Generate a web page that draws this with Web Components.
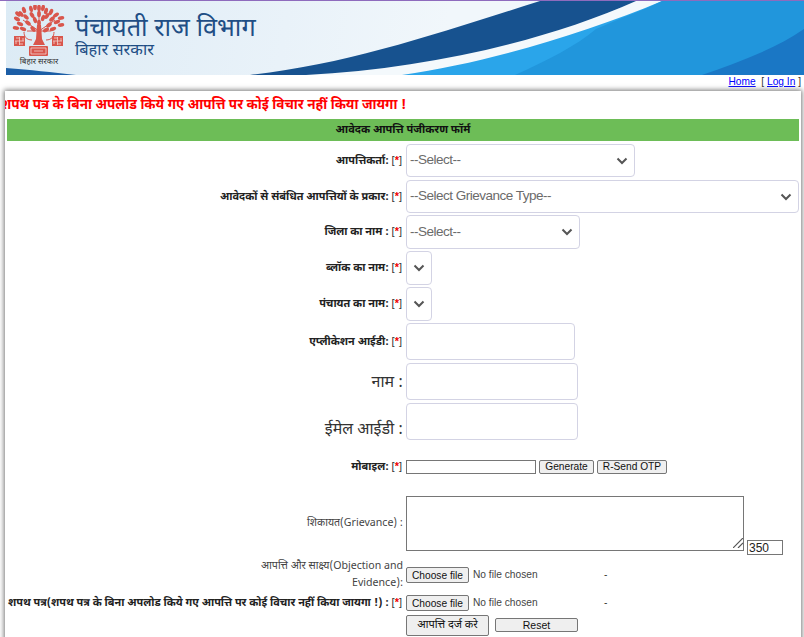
<!DOCTYPE html>
<html lang="hi">
<head>
<meta charset="utf-8">
<title>Panchayati Raj Vibhag</title>
<style>
html, body { margin: 0; padding: 0; height: 637px; overflow: hidden; background: #fff; }
body { font-family: "Liberation Sans", Arial, sans-serif; border-top: 1px solid #8e6bbd; box-sizing: border-box; }
</style>
</head>
<body>
<gov-banner></gov-banner>
<top-links></top-links>
<form-panel>
  <form-row label="आपत्तिकर्ता:" req h="33" gap="3"><drop-down w="229" h="33" text="--Select--"></drop-down></form-row>
  <form-row label="आवेदकों से संबंधित आपत्तियों के प्रकार:" req h="33" gap="2"><drop-down w="393" h="33" text="--Select Grievance Type--"></drop-down></form-row>
  <form-row label="जिला का नाम :" req h="34" gap="2"><drop-down w="174" h="34" text="--Select--"></drop-down></form-row>
  <form-row label="ब्लॉक का नाम:" req h="34" gap="2"><drop-down w="26" h="34"></drop-down></form-row>
  <form-row label="पंचायत का नाम:" req h="34" gap="2"><drop-down w="26" h="34"></drop-down></form-row>
  <form-row label="एप्लीकेशन आईडी:" req h="37" gap="3"><text-box w="169"></text-box></form-row>
  <form-row label="नाम :" big h="37" gap="3"><text-box w="172"></text-box></form-row>
  <form-row label="ईमेल आईडी :" big low h="37" gap="20"><text-box w="172"></text-box></form-row>
  <form-row label="मोबाइल:" req h="14" gap="22">
    <otp-field></otp-field>
  </form-row>
  <form-row label="शिकायत(Grievance) :" plain h="55" gap="7"><grievance-box></grievance-box></form-row>
  <form-row label="आपत्ति और साक्ष्य(Objection and Evidence):" plain h="34" gap="2"><file-pick></file-pick></form-row>
  <form-row label="शपथ पत्र(शपथ पत्र के बिना अपलोड किये गए आपत्ति पर कोई विचार नहीं किया जायगा !) :" req h="18" gap="2"><file-pick></file-pick></form-row>
  <form-row h="22" gap="0"><form-actions></form-actions></form-row>
</form-panel>

<script>
const hindi = '"Noto Sans Devanagari", "Lohit Devanagari", "Noto Sans", "Liberation Sans", sans-serif';

class GovBanner extends HTMLElement {
  constructor() {
    super();
    const leaves = [
      [22,13,-40],[18,18,-60],[25,9,-20],[27,16,-45],[21,23,-70],[17,27,-80],[29,22,-50],[24,28,-70],[19,13,-50],
      [32,8,-10],[33,14,-30],[36,6,0],[36,19,-20],[40,7,0],[40,13,0],[44,7,10],[44,17,20],[47,10,15],[48,15,35],
      [52,11,25],[53,18,50],[50,24,50],[57,14,55],[58,21,70],[54,28,70],[62,17,80],[62,24,80],[47,29,60],[34,28,-40],[40,22,0]
    ].map(([x, y, r]) => `<ellipse cx="${x}" cy="${y}" rx="1.900" ry="3.300" transform="rotate(${r} ${x} ${y})"/>`).join("");
    this.attachShadow({ mode: "open" }).innerHTML = `
<style>
:host { display: block; height: 74px; margin-left: 6px; position: relative; overflow: hidden;
  background: linear-gradient(100deg, #dcebf5 0%, #e9f2f9 35%, #f1f7fb 55%); font-family: ${hindi}; }
svg.bg { position: absolute; inset: 0; width: 100%; height: 100%; }
.row { position: relative; display: flex; height: 100%; }
.seal { width: 68px; margin-left: -1px; padding-top: 4px; flex: none; display: flex; flex-direction: column; }
.seal svg { flex: none; }
.seal span { font-size: 8px; line-height: 9px; text-align: center; color: #333; margin-top: -1px; white-space: nowrap; }
.titles { margin-left: 2px; color: #1f4e85; }
.t1 { font-size: 25.300px; line-height: 30px; margin-top: 14px; white-space: nowrap; }
.t2 { font-size: 16.400px; line-height: 18px; margin-top: -3px; white-space: nowrap; }
</style>
<svg class="bg" viewBox="0 0 798 74" preserveAspectRatio="none">
  <path d="M0 67 C25 69 45 71 70 74 L0 74Z" fill="#1c5ea6"/>
  <path d="M244 74 C340 64 440 30 534 0 L798 0 L798 74Z" fill="#17528f"/>
  <path d="M300 74 C420 68 540 40 630 0 L798 0 L798 74Z" fill="#f4f9fc"/>
  <path d="M396 74 C480 62 580 32 656 0 L798 0 L798 74Z" fill="#2aa5ea"/>
  <path d="M509 74 C540 60 570 45 590 28 C620 15 640 8 656 0 L798 0 L798 74Z" fill="#2196dc"/>
  <path d="M696 74 C730 62 770 48 798 28 L798 74Z" fill="#1a77c5"/>
</svg>
<div class="row">
  <div class="seal">
    <svg width="68" height="54" viewBox="6 4 68 54">
      <g fill="#d9564c">${leaves}
        <path d="M38 24h4l1 14 3 6h-12l3-6z"/>
        <rect x="15" y="35" width="11" height="10"/><rect x="53" y="35" width="11" height="10"/>
        <rect x="30" y="45" width="19" height="10" rx="1"/>
      </g>
      <g stroke="#d9564c" stroke-width="1" fill="none">
        <path d="M40 30L24 19M40 30L56 19M40 30L28 30M40 30L52 30M40 30V8M33 39c-6 0-8-4-8-8M47 39c6 0 8-4 8-8"/>
      </g>
      <g stroke="#f3d3cf" stroke-width=".8" fill="none">
        <path d="M20.500 36v8M16 40h9M17 37h3.500M20.500 43h3.500M17 40v3M24 37v3"/>
        <path d="M58.500 36v8M54 40h9M55 37h3.500M58.500 43h3.500M55 40v3M62 37v3"/>
        <path d="M32 47h15v6h-15z"/><path d="M35 50h9"/>
      </g>
    </svg>
    <span>बिहार सरकार</span>
  </div>
  <div class="titles">
    <div class="t1">पंचायती राज विभाग</div>
    <div class="t2">बिहार सरकार</div>
  </div>
</div>`;
  }
}

class TopLinks extends HTMLElement {
  constructor() {
    super();
    this.attachShadow({ mode: "open" }).innerHTML = `
<style>
:host { display: block; height: 15px; text-align: right; font-size: 10.200px; line-height: 14px; color: #333; padding-right: 3px; }
a { color: #00f; }
</style>
<a href="#">Home</a>&nbsp; [ <a href="#">Log In</a> ]`;
  }
}

class FormPanel extends HTMLElement {
  constructor() {
    super();
    this.attachShadow({ mode: "open" }).innerHTML = `
<style>
:host { display: block; position: relative; margin: 1px 3px 0 5px; height: 560px; background: #fff;
  box-shadow: 0 0 5px 1px #777; overflow: hidden; font-family: ${hindi}; }
.warn { font-size: 13.500px; font-weight: bold; line-height: 20px; height: 20px; color: #f00; white-space: nowrap; margin: 5px 0 3px -4px; }
.head { margin: 0 2px; height: 22px; background: #6dbd57; text-align: center; font-size: 11px; font-weight: bold; line-height: 22px; color: #111; }
.rows { padding-top: 3px; }
</style>
<div class="warn">शपथ पत्र के बिना अपलोड किये गए आपत्ति पर कोई विचार नहीं किया जायगा !</div>
<div class="head">आवेदक आपत्ति पंजीकरण फॉर्म</div>
<div class="rows"><slot></slot></div>`;
  }
}

class FormRow extends HTMLElement {
  constructor() {
    super();
    const star = this.hasAttribute("req") ? ` <span class="br">[<b>*</b>]</span>` : "";
    const cls = [this.hasAttribute("big") ? "big" : "", this.hasAttribute("plain") ? "plain" : "", this.hasAttribute("low") ? "low" : ""].join(" ");
    const label = this.getAttribute("label") || "";
    this.attachShadow({ mode: "open" }).innerHTML = `
<style>
:host { display: grid; grid-template-columns: 397px auto; grid-template-rows: 100%; column-gap: 4px; align-items: center; font-size: 11px; color: #222;
  height: ${this.getAttribute("h")}px; margin-bottom: ${this.getAttribute("gap")}px; }
.lab { text-align: right; font-size: 10.900px; font-weight: bold; line-height: 14px; white-space: nowrap; margin-top: -1px; }
.lab.big { font-weight: normal; font-size: 16px; line-height: 20px; color: #333; padding-top: 4px; margin: 0 -1px 0 0; }
.lab.big.low { padding-top: 18px; }
.lab.plain { font-size: 10.600px; font-weight: normal; color: #444; white-space: normal; line-height: 17px; padding-left: 240px; margin: 0 -1px 0 0; }
.br { font-weight: normal; color: #333; font-family: "Liberation Sans", sans-serif; font-size: 11px; }
b { color: #e00; }
.ctl { display: flex; align-items: center; min-width: 0; }
</style>
<div class="lab ${cls}">${label}${star}</div>
<div class="ctl"><slot></slot></div>`;
  }
}

class DropDown extends HTMLElement {
  constructor() {
    super();
    const w = this.getAttribute("w");
    const h = this.getAttribute("h");
    const text = this.getAttribute("text");
    this.attachShadow({ mode: "open" }).innerHTML = `
<style>
:host { display: block; position: relative; width: ${w}px; height: ${h}px; }
select { appearance: none; display: block; width: 100%; height: 100%; box-sizing: border-box; background: #fff;
  border: 1px solid #d3d3e4; border-radius: 4px; padding: 0 0 2px 3px; font: 13.500px "Liberation Sans", sans-serif; letter-spacing: -.5px; color: #6b6b6b; }
svg { position: absolute; right: 7px; top: 13px; pointer-events: none; }
</style>
<select>${text ? `<option>${text}</option>` : ""}</select>
<svg width="12" height="8" viewBox="0 0 12 8"><path d="M1.500 1.500L6 6l4.500-4.500" fill="none" stroke="#555" stroke-width="2"/></svg>`;
  }
}

class TextBox extends HTMLElement {
  constructor() {
    super();
    this.attachShadow({ mode: "open" }).innerHTML = `
<style>
:host { display: block; width: ${this.getAttribute("w")}px; height: 37px; }
input { display: block; width: 100%; height: 100%; box-sizing: border-box; border: 1px solid #d3d3e4; border-radius: 4px; background: #fff; }
</style>
<input type="text">`;
  }
}

class OtpField extends HTMLElement {
  constructor() {
    super();
    this.attachShadow({ mode: "open" }).innerHTML = `
<style>
:host { display: flex; align-items: center; gap: 3px; }
input { width: 130px; height: 14px; box-sizing: border-box; border: 1px solid #767676; padding: 0; margin: 0; }
button { height: 14px; box-sizing: border-box; padding: 0; width: 55px; font: 10.200px/12px "Liberation Sans", sans-serif; background: #efefef;
  border: 1px solid #767676; border-radius: 2px; color: #111; }
button + button { width: 70px; }
</style>
<input type="text"><button type="button">Generate</button><button type="button">R-Send OTP</button>`;
  }
}

class GrievanceBox extends HTMLElement {
  constructor() {
    super();
    this.attachShadow({ mode: "open" }).innerHTML = `
<style>
:host { display: flex; position: relative; align-items: flex-end; gap: 3px; }
textarea { width: 338px; height: 55px; box-sizing: border-box; border: 1px solid #767676; margin: 0; padding: 0; display: block; resize: none; }
input { width: 36px; height: 15px; box-sizing: border-box; border: 1px solid #767676; padding: 0 0 0 1px; margin: 0 0 -4px; font: 12px "Liberation Sans", sans-serif; color: #222; }
svg { position: absolute; left: 327px; top: 42px; }
</style>
<textarea></textarea><input type="text" value="350">
<svg width="10" height="10" viewBox="0 0 10 10"><path d="M10 0L0 10M10 5L5 10" fill="none" stroke="#555" stroke-width="1.200"/></svg>`;
  }
}

class FilePick extends HTMLElement {
  constructor() {
    super();
    this.attachShadow({ mode: "open" }).innerHTML = `
<style>
:host { display: flex; align-items: center; font: 10.200px/16px "Liberation Sans", sans-serif; color: #444; }
button { height: 16px; width: 63px; padding: 0; font: inherit; border: 1px solid #767676; border-radius: 2px; background: #efefef; color: #111; }
.name { width: 131px; margin-left: 4px; }
.dash { color: #333; }
input { display: none; }
</style>
<input type="file"><button type="button">Choose file</button><span class="name">No file chosen</span><span class="dash">-</span>`;
    this.shadowRoot.querySelector("button").addEventListener("click", () => {
      this.shadowRoot.querySelector("input").click();
    });
  }
}

class FormActions extends HTMLElement {
  constructor() {
    super();
    this.attachShadow({ mode: "open" }).innerHTML = `
<style>
:host { display: flex; align-items: center; gap: 6px; }
button { box-sizing: border-box; background: #efefef; border: 1px solid #767676; border-radius: 2px; padding: 0; color: #111; }
.go { width: 83px; height: 21px; font: 11px ${hindi}; }
.rs { width: 83px; height: 14px; font: 10.500px/12px "Liberation Sans", sans-serif; }
</style>
<button type="button" class="go">आपत्ति दर्ज करे</button><button type="reset" class="rs">Reset</button>`;
  }
}

customElements.define("gov-banner", GovBanner);
customElements.define("top-links", TopLinks);
customElements.define("form-panel", FormPanel);
customElements.define("form-row", FormRow);
customElements.define("drop-down", DropDown);
customElements.define("text-box", TextBox);
customElements.define("otp-field", OtpField);
customElements.define("grievance-box", GrievanceBox);
customElements.define("file-pick", FilePick);
customElements.define("form-actions", FormActions);
</script>
</body>
</html>
